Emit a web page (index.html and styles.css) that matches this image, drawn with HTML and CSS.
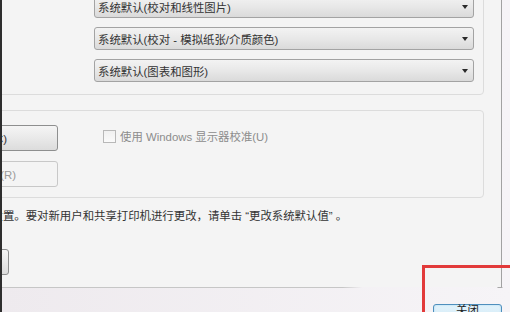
FILE: index.html
```html
<!DOCTYPE html>
<html lang="zh-CN">
<head>
<meta charset="UTF-8">
<title>颜色管理 - 高级</title>
<link rel="stylesheet" href="styles.css">
</head>
<body>
<div class="window">
  <div class="panel">
    <div class="group group-defaults">
      <div class="combo"><span>系统默认(校对和线性图片)</span><i class="arrow"></i></div>
      <div class="combo"><span>系统默认(校对 - 模拟纸张/介质颜色)</span><i class="arrow"></i></div>
      <div class="combo"><span>系统默认(图表和图形)</span><i class="arrow"></i></div>
    </div>
    <div class="group group-calib">
      <div class="btn-col">
        <button class="btn btn-calib"><span>校准显示器(C)</span></button>
        <button class="btn btn-reload" disabled><span>重新加载当前校准(R)</span></button>
      </div>
      <label class="check"><span class="box"></span>使用 Windows 显示器校准(U)</label>
    </div>
    <p class="note">设置。要对新用户和共享打印机进行更改，请单击 “更改系统默认值” 。</p>
    <button class="btn btn-change"><span>更改系统默认值(S)...</span></button>
  </div>
  <div class="footer">
    <button class="close">关闭</button>
  </div>
  <div class="highlight"></div>
</div>
</body>
</html>
```

FILE: styles.css
```css
body {
  margin: 0;
  font-family: "Liberation Sans", "Noto Sans CJK SC", sans-serif;
  font-size: 11.4px;
  color: #333333;
}
.window {
  position: relative;
  width: 508px;
  height: 312px;
  border-left: 2px solid #2e2e2e;
  background: linear-gradient(to right, #eeeaee, #f6f4f7);
  overflow: hidden;
}
.panel {
  width: 499px;
  height: 287px;
  border-right: 1px solid #a2a2a2;
  background-color: #f4f4f4;
  overflow: hidden;
}
.group {
  border: 1px solid #dcdcdc;
  border-radius: 4px;
  margin-left: -40px;
  margin-right: 17px;
}
.group-defaults {
  margin-top: -40px;
  padding: 34px 9px 12px 131px;
  display: flex;
  flex-direction: column;
  gap: 9px;
}
.combo {
  height: 21px;
  border: 1px solid #a3a3a3;
  border-radius: 3px;
  background: linear-gradient(#f3f3f3, #e8e8e8 50%, #dadada);
  display: flex;
  align-items: center;
  justify-content: space-between;
  padding-left: 3px;
}
.arrow {
  width: 0;
  height: 0;
  border-top: 4px solid #2a2a2a;
  border-left: 3px solid transparent;
  border-right: 3px solid transparent;
  margin-right: 5px;
}
.group-calib {
  margin-top: 15px;
  padding: 14px 0 10px 7px;
  display: flex;
  gap: 45px;
}
.btn-col {
  display: flex;
  flex-direction: column;
  gap: 10px;
}
.btn {
  width: 88px;
  height: 26px;
  border: 1px solid #8e8f8f;
  border-radius: 3px;
  background: linear-gradient(#f5f5f5, #e9e9e9 50%, #dcdcdc);
  font: inherit;
  color: #333333;
  display: flex;
  align-items: center;
  justify-content: flex-end;
  white-space: nowrap;
  overflow: hidden;
}
.btn span {
  flex: none;
}
.btn-calib {
  padding: 0 50px 0 0;
}
.btn-reload {
  padding: 0 41px 0 0;
  border-color: #c8c8c8;
  background: #f4f4f4;
  color: #9a9a9a;
}
.check {
  display: flex;
  align-items: center;
  gap: 4px;
  height: 14px;
  margin-top: 4px;
  color: #8c8c8c;
}
.box {
  width: 11px;
  height: 11px;
  border: 1px solid #b8b8b8;
  background: linear-gradient(#f0f0f0, #fafafa);
}
.note {
  margin: 10px 0 0 -10.5px;
  line-height: 16px;
  white-space: nowrap;
}
.btn-change {
  width: 120px;
  margin: 25px 0 0 -113px;
  padding: 0 20px 0 0;
}
.footer {
  height: 24px;
  border-top: 1px solid;
  border-image: linear-gradient(to right, #c6c6c6 340px, rgba(198,198,198,0) 360px, rgba(198,198,198,0) 494px, #a8a8a8 495px, #a8a8a8 499px, rgba(0,0,0,0) 500px) 1;
  display: flex;
  justify-content: flex-end;
  padding-right: 8px;
}
.close {
  width: 69px;
  height: 24px;
  margin-top: 16px;
  border: 1px solid #4f8fbd;
  border-radius: 3px;
  background: linear-gradient(#e3f3fb, #c9e6f5);
  box-shadow: inset 0 0 2px #9fd3ee;
  font: inherit;
  line-height: 11px;
  color: #222222;
  display: flex;
  align-items: flex-start;
  justify-content: center;
  padding: 0;
}
.highlight {
  position: absolute;
  left: 420px;
  top: 265px;
  width: 100px;
  height: 60px;
  border: 3px solid #e23a3a;
}
```
